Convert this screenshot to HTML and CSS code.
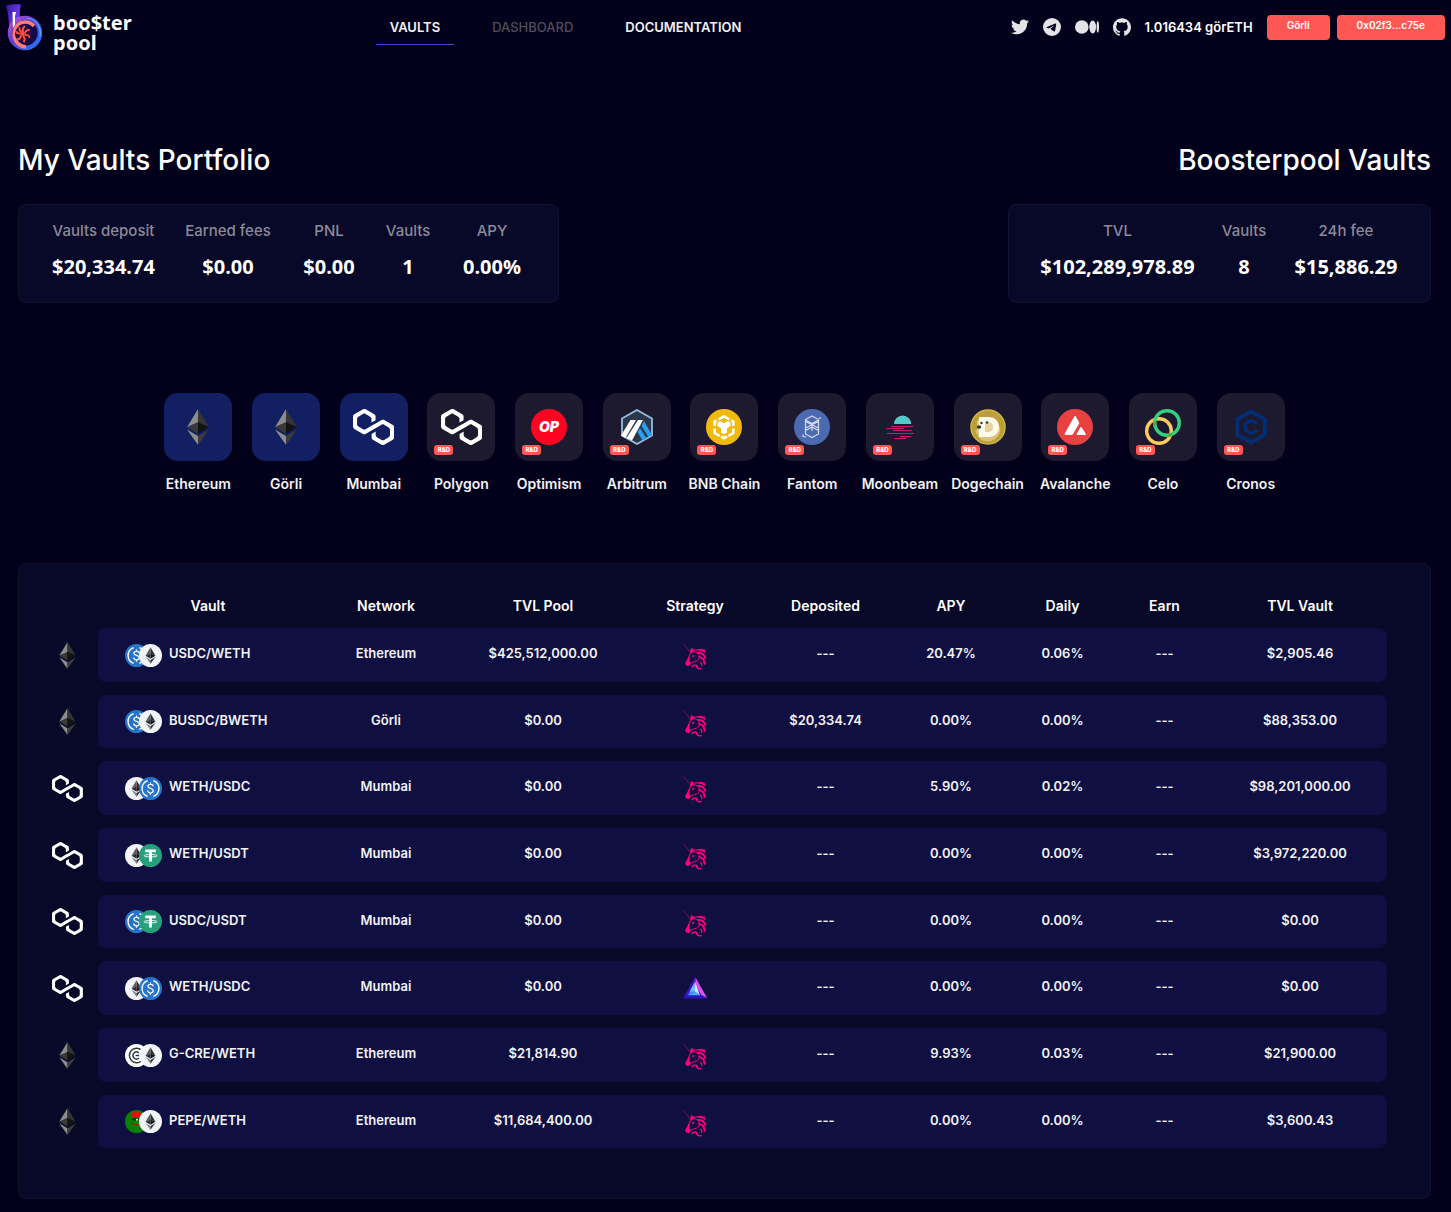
FILE: index.html
```html
<!DOCTYPE html>
<html lang="en">
<head>
<meta charset="utf-8">
<meta name="viewport" content="width=device-width, initial-scale=1">
<title>Boosterpool Vaults</title>
<link rel="stylesheet" href="styles.css">
</head>
<body>
<svg class="sprite" aria-hidden="true">
  <defs>
    <linearGradient id="pipe" x1="0" y1="0" x2="1" y2="1"><stop offset="0" stop-color="#2a1a9c"/><stop offset=".5" stop-color="#6a35e0"/><stop offset="1" stop-color="#2b6bff"/></linearGradient>
    <linearGradient id="shell" x1="0" y1="0" x2="1" y2="1"><stop offset="0" stop-color="#c05ad0"/><stop offset=".4" stop-color="#5a3fd8"/><stop offset="1" stop-color="#1f7bff"/></linearGradient>
    <linearGradient id="prism" x1="0" y1="0" x2="0" y2="1"><stop offset="0" stop-color="#7c7cf8"/><stop offset=".6" stop-color="#6fd0ff"/><stop offset="1" stop-color="#2a4cf0"/></linearGradient>
  </defs>
  <symbol id="eth" viewBox="0 0 22 36">
    <path fill="#8c8c8c" d="M11 0 0 18.3 11 13.3z"/><path fill="#343434" d="M11 0v13.3l11 5z"/>
    <path fill="#393939" d="M11 13.3 0 18.3l11 6.5z"/><path fill="#141414" d="M11 13.3v11.5l11-6.5z"/>
    <path fill="#8c8c8c" d="M0 20.4 11 36v-9.1z"/><path fill="#3c3c3b" d="M11 26.9V36l11-15.6z"/>
  </symbol>
  <symbol id="polygon" viewBox="0 0 38.4 33.5">
    <path fill="#fff" d="M29 10.2c-.7-.4-1.6-.4-2.4 0L21 13.5l-3.8 2.1-5.5 3.3c-.7.4-1.6.4-2.4 0L5 16.3c-.7-.4-1.2-1.2-1.2-2.1v-5c0-.8.4-1.6 1.2-2.1l4.3-2.5c.7-.4 1.6-.4 2.4 0L16 7.2c.7.4 1.2 1.2 1.2 2.1v3.3l3.8-2.2V7c0-.8-.4-1.6-1.2-2.1l-8-4.7c-.7-.4-1.6-.4-2.4 0L1.2 5C.4 5.4 0 6.2 0 7v9.4c0 .8.4 1.6 1.2 2.1l8.1 4.7c.7.4 1.6.4 2.4 0l5.5-3.2 3.8-2.2 5.5-3.2c.7-.4 1.6-.4 2.4 0l4.3 2.5c.7.4 1.2 1.2 1.2 2.1v5c0 .8-.4 1.6-1.2 2.1L29 28.8c-.7.4-1.6.4-2.4 0l-4.3-2.5c-.7-.4-1.2-1.2-1.2-2.1V21l-3.8 2.2v3.3c0 .8.4 1.6 1.2 2.1l8.1 4.7c.7.4 1.6.4 2.4 0l8.1-4.7c.7-.4 1.2-1.2 1.2-2.1V17c0-.8-.4-1.6-1.2-2.1L29 10.2z"/>
  </symbol>
  <symbol id="usdc" viewBox="0 0 24 24">
    <circle cx="12" cy="12" r="12" fill="#2775ca"/>
    <path fill="none" stroke="#fff" stroke-width="1.4" d="M9 3.800a8.700 8.700 0 0 0 0 16.400M15 3.800a8.700 8.700 0 0 1 0 16.400"/>
    <path fill="none" stroke="#fff" stroke-width="1.300" d="M14.700 9.700c0-1.500-1.100-2.100-2.700-2.100s-2.700.7-2.700 2c0 3.100 5.600 1.500 5.600 4.700 0 1.500-1.200 2.200-2.900 2.200s-2.900-.7-2.900-2.300M12 5.700v2M12 16.400v2"/>
  </symbol>
  <symbol id="weth" viewBox="0 0 24 24">
    <circle cx="12" cy="12" r="12" fill="#f3f4fa"/>
    <path fill="#5a5d5a" d="M12 3.500 6.800 12.300 12 10z"/><path fill="#2f3030" d="M12 3.500V10l5.200 2.300z"/>
    <path fill="#2f3030" d="m6.800 12.300 5.200 3.100V10z"/><path fill="#131313" d="M12 10v5.400l5.200-3.100z"/>
    <path fill="#828384" d="m6.800 13.600 5.200 7v-4z"/><path fill="#343535" d="M12 16.600v4l5.200-7z"/>
  </symbol>
  <symbol id="usdt" viewBox="0 0 24 24">
    <circle cx="12" cy="12" r="12" fill="#26a17b"/>
    <path fill="#fff" d="M6.500 5.700h11v3h-4v9.500h-3V8.700h-4z"/>
    <ellipse cx="12" cy="12.200" rx="6.800" ry="1.300" fill="none" stroke="#fff" stroke-width=".9"/>
  </symbol>
  <symbol id="cre" viewBox="0 0 24 24">
    <circle cx="12" cy="12" r="12" fill="#fff"/>
    <path fill="none" stroke="#30343b" stroke-width="1.500" d="M17 6.300A7.500 7.500 0 1 0 17 17.700M14.500 9.400a3.600 3.600 0 1 0 0 5.200M11 12h6"/>
  </symbol>
  <symbol id="pepe" viewBox="0 0 24 24">
    <circle cx="12" cy="12" r="12" fill="#078207"/>
    <path fill="#e01212" d="M6 3.500C8 1 15 1 17 3.500v3.300c-3 1.400-8 1.400-11 0z"/>
    <path fill="#0b3c0b" d="M6.500 9c3-1 6-.5 10 0v1.800c-3 .8-7 .5-9.500-.6z"/><circle cx="12.500" cy="10.200" r="1" fill="#fff"/>
    <path fill="none" stroke="#9c2515" stroke-width="1.500" d="M6.500 13.500c2 1.800 6 2.400 10.500 2"/>
  </symbol>
  <symbol id="unicorn" viewBox="0 0 72 80">
    <path fill="none" stroke="#ff007a" stroke-opacity=".7" stroke-width="2" d="m1 1 22 27"/>
    <path fill="#ff007a" d="M21 30c1-7 2-12 6-16l4 6 3 7-7 1-5 6zM15 44l4-10 4-3-4 15 1 8 4 7-4 6c-6 3-13 0-13-6 0-6 6-10 8-17zM27 38l8-3-1 5-6 2z"/>
    <path fill="#ff007a" d="M32 19c4-1 6 1 11-1l14-1 4 4 2-5c3 5 3 9 3 14-8-7-19-9-34-7z"/>
    <g fill="none" stroke="#ff007a" stroke-linecap="round">
      <path stroke-width="6" d="M46 29c11 1 18 6 21 15M49 41c10 3 16 10 16 21"/>
      <path stroke-width="3" d="M34 26c7 1 12 4 14 9 2 6 1 12-4 17-5 4-12 3-20 7"/>
      <path stroke-width="4" d="M27 71c3-7 13-7 17-1M40 69c1 6 6 9 14 7M53 57c3 3 4 6 3 10"/>
    </g>
  </symbol>
  <symbol id="gem" viewBox="0 -3 72 80">
    <path fill="#3a12c8" d="M36 0 72 64 0 64z"/><path fill="#e24df0" d="m38 2 34 60-16-8-19-30z"/>
    <path fill="#2617b8" d="m2 62 14-9 40 1 14 9z"/><path fill="url(#prism)" d="m36 12-22 42 22-10z"/>
    <path fill="#46a8ff" d="m36 44-22 10h40z"/><path fill="#c9e6ff" d="m36 14 14 38-14-8z"/>
  </symbol>
</svg>

<header class="topbar">
  <a class="brand" href="#" aria-label="Booster pool">
    <svg class="brand-mark" viewBox="0 0 36 47" aria-hidden="true">
      <path fill="url(#pipe)" d="M0 1.500C4 0 10 0 15 .5c-1.500 4-1.500 9-1 15l-3 9-8 10C3.500 24 3 10 0 1.500z"/>
      <circle cx="19" cy="29" r="15" fill="#14094a" stroke="url(#shell)" stroke-width="4.500"/>
      <path fill="none" stroke="#4fb0ff" stroke-width="1.200" d="M21 14c9 1 15 9 13 18"/>
      <path fill="none" stroke="#ff7a78" stroke-width="3.500" d="M28 22c-6-6-16-5-19 3-3 9 2 17 11 18"/>
      <path fill="#fff" d="M6.500 8h3.600L9 12v9l-2 3z"/>
      <circle cx="17" cy="30" r="8" fill="#2a0c3c"/>
      <path fill="none" stroke="#ff5040" stroke-width="1.900" stroke-linecap="round" d="M17 27.500q-1-3 1.500-5M19 28.500q1.500-3 4-2.500M19.500 31q3-.5 4 2M17.500 32.500q2 2.500.5 5M15 32q-.5 3-3.500 3.500M14.500 29.500q-3 .5-4.500-2M15.500 28q-2.500-1.500-2-4"/>
      <circle cx="17" cy="30" r="2" fill="#ff5040"/>
    </svg>
    <span class="brand-name">boo$ter<br>pool</span>
  </a>
  <nav class="menu" aria-label="Main">
    <a class="menu-link active" href="#">VAULTS</a>
    <a class="menu-link disabled" href="#">DASHBOARD</a>
    <a class="menu-link" href="#">DOCUMENTATION</a>
  </nav>
  <div class="account">
    <a href="#" aria-label="Twitter"><svg class="social" viewBox="0 0 24 24"><path d="M23.953 4.570a10 10 0 01-2.825.775 4.958 4.958 0 002.163-2.723c-.951.555-2.005.959-3.127 1.184a4.920 4.920 0 00-8.384 4.482C7.690 8.095 4.067 6.130 1.640 3.162a4.822 4.822 0 00-.666 2.475c0 1.710.870 3.213 2.188 4.096a4.904 4.904 0 01-2.228-.616v.06a4.923 4.923 0 003.946 4.827 4.996 4.996 0 01-2.212.085 4.936 4.936 0 004.604 3.417 9.867 9.867 0 01-6.102 2.105c-.39 0-.779-.023-1.170-.067a13.995 13.995 0 007.557 2.209c9.053 0 13.998-7.496 13.998-13.985 0-.21 0-.42-.015-.63A9.935 9.935 0 0024 4.590z"/></svg></a>
    <a href="#" aria-label="Telegram"><svg class="social" viewBox="0 0 24 24"><path d="M12 0a12 12 0 1 0 0 24 12 12 0 0 0 0-24zm5.562 8.161c-.18 1.897-.962 6.502-1.359 8.627-.168.900-.5 1.201-.82 1.230-.697.064-1.226-.461-1.901-.903-1.056-.692-1.653-1.123-2.678-1.799-1.185-.781-.417-1.210.258-1.911.177-.184 3.247-2.977 3.307-3.230.007-.032.015-.150-.056-.212s-.174-.041-.248-.024c-.106.024-1.793 1.139-5.062 3.345-.479.329-.913.489-1.302.481-.428-.009-1.252-.242-1.865-.442-.751-.244-1.349-.374-1.297-.788.027-.216.324-.437.893-.663 3.498-1.524 5.831-2.529 6.998-3.015 3.333-1.386 4.025-1.627 4.477-1.635.099-.002.321.023.465.141.119.098.152.228.166.331.016.122.034.355.019.498z"/></svg></a>
    <a href="#" aria-label="Medium"><svg class="social wide" viewBox="0 0 24 14"><circle cx="6.800" cy="7" r="6.800"/><ellipse cx="17.700" cy="7" rx="3.400" ry="6.400"/><ellipse cx="22.800" cy="7" rx="1.200" ry="5.700"/></svg></a>
    <a href="#" aria-label="GitHub"><svg class="social" viewBox="0 0 24 24"><path d="M12 .297c-6.630 0-12 5.373-12 12 0 5.303 3.438 9.800 8.205 11.385.600.113.820-.258.820-.577 0-.285-.010-1.040-.015-2.040-3.338.724-4.042-1.610-4.042-1.610C4.422 18.070 3.633 17.700 3.633 17.700c-1.087-.744.084-.729.084-.729 1.205.084 1.838 1.236 1.838 1.236 1.070 1.835 2.809 1.305 3.495.998.108-.776.417-1.305.760-1.605-2.665-.300-5.466-1.332-5.466-5.930 0-1.310.465-2.380 1.235-3.220-.135-.303-.540-1.523.105-3.176 0 0 1.005-.322 3.300 1.230.960-.267 1.980-.399 3-.405 1.020.006 2.040.138 3 .405 2.280-1.552 3.285-1.230 3.285-1.230.645 1.653.240 2.873.120 3.176.765.840 1.230 1.910 1.230 3.220 0 4.610-2.805 5.625-5.475 5.920.420.360.810 1.096.810 2.220 0 1.606-.015 2.896-.015 3.286 0 .315.210.690.825.570C20.565 22.092 24 17.592 24 12.297c0-6.627-5.373-12-12-12"/></svg></a>
    <span class="balance">1.016434 görETH</span>
    <div class="account-buttons">
      <button class="pill" type="button">Görli</button>
      <button class="pill address" type="button">0x02f3...c75e</button>
    </div>
  </div>
</header>

<main class="page">
  <div class="summary">
    <section>
      <h1>My Vaults Portfolio</h1>
      <dl class="stats portfolio">
        <div><dt>Vaults deposit</dt><dd>$20,334.74</dd></div>
        <div><dt>Earned fees</dt><dd>$0.00</dd></div>
        <div><dt>PNL</dt><dd>$0.00</dd></div>
        <div><dt>Vaults</dt><dd>1</dd></div>
        <div><dt>APY</dt><dd>0.00%</dd></div>
      </dl>
    </section>
    <section class="right">
      <h1>Boosterpool Vaults</h1>
      <dl class="stats totals">
        <div><dt>TVL</dt><dd>$102,289,978.89</dd></div>
        <div><dt>Vaults</dt><dd>8</dd></div>
        <div><dt>24h fee</dt><dd>$15,886.29</dd></div>
      </dl>
    </section>
  </div>

  <div class="networks">
    <button class="network live" type="button"><span class="tile"><svg class="h36" viewBox="0 0 22 36"><use href="#eth"/></svg></span>Ethereum</button>
    <button class="network live" type="button"><span class="tile"><svg class="h36" viewBox="0 0 22 36"><use href="#eth"/></svg></span>Görli</button>
    <button class="network live" type="button"><span class="tile"><svg class="h36" viewBox="0 0 38.4 33.5"><use href="#polygon"/></svg></span>Mumbai</button>
    <button class="network" type="button"><span class="tile"><svg class="h36" viewBox="0 0 38.4 33.5"><use href="#polygon"/></svg><span class="tag">R&amp;D</span></span>Polygon</button>
    <button class="network" type="button"><span class="tile"><svg class="h36" viewBox="0 0 36 36"><circle cx="18" cy="18" r="18" fill="#ff0420"/><text x="18" y="23" class="op">OP</text></svg><span class="tag">R&amp;D</span></span>Optimism</button>
    <button class="network" type="button"><span class="tile"><svg class="h36" viewBox="0 0 32 36"><path fill="#2d374b" stroke="#96bedc" stroke-width="1.800" d="m16 1 15 8.500v17L16 35 1 26.500v-17z"/><path fill="#fff" d="M9.500 11h5.500L4.500 29 0 26.500zM17 11h5L11 31.500 5.500 29z"/><path fill="#28a0f0" d="m23 12 8 14-3.500 2-7-11zM19 19l6.500 10.500-4 2L16.500 23z"/></svg><span class="tag">R&amp;D</span></span>Arbitrum</button>
    <button class="network" type="button"><span class="tile"><svg class="h36" viewBox="0 0 36 36"><circle cx="18" cy="18" r="18" fill="#f0b90b"/><path fill="none" stroke="#fff" stroke-width="2.600" d="m12.500 10.500 5.500-3.200 5.500 3.200M8.700 17v-4.500l2-1.200M27.300 17v-4.500l-2-1.200M8.700 19.500v4.500l5 3M27.300 19.500v4.500l-5 3M15 27.500l3 1.700 3-1.700"/><path fill="#fff" d="m11.500 13.500 2.500-1.500 4 2.300 4-2.300 2.500 1.500v3.500l-3.500 2.200v4.300l-3 1.700-3-1.700v-4.300L11.500 17z"/></svg><span class="tag">R&amp;D</span></span>BNB Chain</button>
    <button class="network" type="button"><span class="tile"><svg class="h36" viewBox="0 0 36 36"><circle cx="18" cy="18" r="18" fill="#4b6ab2"/><path fill="none" stroke="#d4dcee" stroke-width="1.200" d="m18 7 6.500 3.500v14.500L18 28.500 11.500 25V10.500zM11.500 11 18 14.500l6.500-3.500M11.500 19l13-6.500M24.500 19l-13-6.500M11.500 21.500l6.500-3.500 6.500 3.500M18 14.500V22M25 9.500l2-1M9 25.500v2l3 .5"/></svg><span class="tag">R&amp;D</span></span>Fantom</button>
    <button class="network" type="button"><span class="tile"><svg class="h36" viewBox="0 0 28 36"><path fill="#53cbc9" d="M8 15a8.600 8.600 0 0 1 17.200 0z"/><path stroke="#c8147b" stroke-width="1.200" d="M5 17.500h22M0 19.500h18M7 21.500h19M1 24.500h27M14 27.500h11M8 29.500h12"/></svg><span class="tag">R&amp;D</span></span>Moonbeam</button>
    <button class="network" type="button"><span class="tile"><svg class="h36" viewBox="0 0 36 36"><circle cx="18" cy="18" r="17" fill="#ba9f33" stroke="#d0b54a" stroke-width="1.500"/><path fill="#d9c37c" d="M5 22c5-5 18-8 25-4 1 4-1 9-5 12-6 4-12 3-16-1z"/><path fill="#c9974f" d="m12 9 2-6 5 5 4-1 2-4 2 8-3 5H12z"/><path fill="#e8d3a0" d="M7 14c1-6 8-7 12-5l7 5 1 11-12 3-7-5z"/><path fill="#fffbea" fill-rule="evenodd" d="M9 8h9c7 0 11 4 11 10s-4 10-11 10H9zm6 5v10h3c3 0 5-2 5-5s-2-5-5-5z"/><circle cx="11.500" cy="14" r="1.200" fill="#333"/><circle cx="17" cy="13.500" r="1.200" fill="#333"/><ellipse cx="9" cy="18" rx="2.200" ry="1.700" fill="#333"/></svg><span class="tag">R&amp;D</span></span>Dogechain</button>
    <button class="network" type="button"><span class="tile"><svg class="h36" viewBox="0 0 36 36"><circle cx="18" cy="18" r="18" fill="#e84142"/><path fill="#fff" d="M17 8c.8-1.300 1.500-1.300 2.200 0l2.600 4.700c.5 1 .5 1.500 0 2.500L16 25c-.5.800-1 1-2 1H9c-1.500 0-1.700-.7-1-2zM23 19c.7-1.200 1.300-1.200 2 0l3.500 5.500c.6 1 .3 1.500-.8 1.500h-7c-1.100 0-1.400-.5-.8-1.500z"/></svg><span class="tag">R&amp;D</span></span>Avalanche</button>
    <button class="network" type="button"><span class="tile"><svg class="h36" viewBox="0 0 36 36"><circle cx="14" cy="22" r="12.300" fill="none" stroke="#fbcc5c" stroke-width="3.400"/><circle cx="22" cy="14" r="12.300" fill="none" stroke="#35d07f" stroke-width="3.400"/><path fill="none" stroke="#5ea33b" stroke-width="3.400" d="M9.800 12.500q-.4 2 .3 4M23.500 26.200q2 0 3.500-1"/></svg><span class="tag">R&amp;D</span></span>Celo</button>
    <button class="network" type="button"><span class="tile"><svg class="h36" viewBox="0 0 32 36"><g fill="none" stroke="#002d74"><path stroke-width="4" d="m16 2.500 13.800 7.800v15.400L16 33.500 2.200 25.700V10.300z"/><path stroke-width="3" d="M21.500 15.500v-1L16 11.500l-5.500 3.200v6.600l5.500 3.200 5.500-3v-1"/></g></svg><span class="tag">R&amp;D</span></span>Cronos</button>
  </div>

  <section class="vaults">
    <table>
      <colgroup><col class="c-chain"><col class="c-vault"><col class="c-network"><col class="c-pool"><col class="c-strategy"><col class="c-deposited"><col class="c-apy"><col class="c-daily"><col class="c-earn"><col class="c-tvl"></colgroup>
      <thead>
        <tr><td></td><th scope="col">Vault</th><th scope="col">Network</th><th scope="col">TVL Pool</th><th scope="col">Strategy</th><th scope="col">Deposited</th><th scope="col">APY</th><th scope="col">Daily</th><th scope="col">Earn</th><th scope="col">TVL Vault</th></tr>
      </thead>
      <tbody>
        <tr><td><svg class="chain" viewBox="0 0 22 36"><use href="#eth"/></svg></td><td><div class="pair"><svg><use href="#usdc"/></svg><svg><use href="#weth"/></svg><span>USDC/WETH</span></div></td><td>Ethereum</td><td>$425,512,000.00</td><td><svg class="strategy"><use href="#unicorn"/></svg></td><td>---</td><td>20.47%</td><td>0.06%</td><td>---</td><td>$2,905.46</td></tr>
        <tr><td><svg class="chain" viewBox="0 0 22 36"><use href="#eth"/></svg></td><td><div class="pair"><svg><use href="#usdc"/></svg><svg><use href="#weth"/></svg><span>BUSDC/BWETH</span></div></td><td>Görli</td><td>$0.00</td><td><svg class="strategy"><use href="#unicorn"/></svg></td><td>$20,334.74</td><td>0.00%</td><td>0.00%</td><td>---</td><td>$88,353.00</td></tr>
        <tr><td><svg class="chain" viewBox="0 0 38.4 33.5"><use href="#polygon"/></svg></td><td><div class="pair"><svg><use href="#weth"/></svg><svg><use href="#usdc"/></svg><span>WETH/USDC</span></div></td><td>Mumbai</td><td>$0.00</td><td><svg class="strategy"><use href="#unicorn"/></svg></td><td>---</td><td>5.90%</td><td>0.02%</td><td>---</td><td>$98,201,000.00</td></tr>
        <tr><td><svg class="chain" viewBox="0 0 38.4 33.5"><use href="#polygon"/></svg></td><td><div class="pair"><svg><use href="#weth"/></svg><svg><use href="#usdt"/></svg><span>WETH/USDT</span></div></td><td>Mumbai</td><td>$0.00</td><td><svg class="strategy"><use href="#unicorn"/></svg></td><td>---</td><td>0.00%</td><td>0.00%</td><td>---</td><td>$3,972,220.00</td></tr>
        <tr><td><svg class="chain" viewBox="0 0 38.4 33.5"><use href="#polygon"/></svg></td><td><div class="pair"><svg><use href="#usdc"/></svg><svg><use href="#usdt"/></svg><span>USDC/USDT</span></div></td><td>Mumbai</td><td>$0.00</td><td><svg class="strategy"><use href="#unicorn"/></svg></td><td>---</td><td>0.00%</td><td>0.00%</td><td>---</td><td>$0.00</td></tr>
        <tr><td><svg class="chain" viewBox="0 0 38.4 33.5"><use href="#polygon"/></svg></td><td><div class="pair"><svg><use href="#weth"/></svg><svg><use href="#usdc"/></svg><span>WETH/USDC</span></div></td><td>Mumbai</td><td>$0.00</td><td><svg class="strategy"><use href="#gem"/></svg></td><td>---</td><td>0.00%</td><td>0.00%</td><td>---</td><td>$0.00</td></tr>
        <tr><td><svg class="chain" viewBox="0 0 22 36"><use href="#eth"/></svg></td><td><div class="pair"><svg><use href="#cre"/></svg><svg><use href="#weth"/></svg><span>G-CRE/WETH</span></div></td><td>Ethereum</td><td>$21,814.90</td><td><svg class="strategy"><use href="#unicorn"/></svg></td><td>---</td><td>9.93%</td><td>0.03%</td><td>---</td><td>$21,900.00</td></tr>
        <tr><td><svg class="chain" viewBox="0 0 22 36"><use href="#eth"/></svg></td><td><div class="pair"><svg><use href="#pepe"/></svg><svg><use href="#weth"/></svg><span>PEPE/WETH</span></div></td><td>Ethereum</td><td>$11,684,400.00</td><td><svg class="strategy"><use href="#unicorn"/></svg></td><td>---</td><td>0.00%</td><td>0.00%</td><td>---</td><td>$3,600.43</td></tr>
      </tbody>
    </table>
  </section>
</main>
</body>
</html>
```
FILE: styles.css
```css
* { box-sizing: border-box; }

body {
  margin: 0;
  background: #03001b;
  color: #f2f2f5;
  font: 500 13px/20px Inter, "Open Sans", sans-serif;
}

a { color: inherit; text-decoration: none; }
button { font: inherit; color: inherit; border: 0; background: none; padding: 0; cursor: pointer; }
svg { display: block; }
.sprite { position: absolute; width: 0; height: 0; }

/* Top bar */
.topbar {
  display: grid;
  grid-template-columns: 26% auto 1fr;
  align-items: center;
  min-height: 54px;
  padding-right: 6px;
}
.brand { display: flex; gap: 11px; padding-left: 6px; align-items: center; }
.brand-mark { width: 36px; height: 47px; }
.brand-name { padding-top: 12px; color: #fff; font: 700 20px/20px "Noto Sans", sans-serif; }
.menu { display: flex; align-items: center; gap: 24px; }
.menu-link { padding: 7px 14px; border-bottom: 1px solid transparent; font-weight: 600; }
.menu-link.active { border-color: #4a40d8; }
.menu-link.disabled { color: #504e5c; font-weight: 500; }
.account { display: flex; align-items: center; justify-content: flex-end; gap: 14px; }
.social { width: 18px; height: 18px; fill: #e4e4e8; }
.social.wide { width: 24px; height: 14px; }
.balance { color: #fff; font-weight: 600; }
.account-buttons { display: flex; gap: 7px; }
.pill {
  height: 25px;
  padding: 0 20px 4px;
  border-radius: 4px;
  background: #ff5753;
  color: #fff;
  font-size: 10px;
  font-weight: 600;
}

/* Summary */
.page { padding: 86px 20px 13px 18px; }
.summary { display: flex; justify-content: space-between; }
.right { text-align: right; }
h1 { margin: 0 0 24px; color: #fff; font-size: 28px; line-height: 40px; font-weight: 500; }
.stats {
  display: grid;
  gap: 28px;
  margin: 0;
  padding: 16px 32px 21px;
  border: 1px solid #12122f;
  border-radius: 8px;
  background: #080828;
  text-align: center;
  white-space: nowrap;
}
.stats.portfolio { grid-template-columns: 105px 88px 58px 44px 68px; }
.stats.totals { grid-template-columns: 153px 44px 104px; }
.stats div { display: flex; flex-direction: column; align-items: center; }
dt { color: #8b8a98; font-size: 15px; line-height: 20px; font-weight: 500; }
dd { margin: 12px 0 0; color: #fff; font: 700 20px/28px "Open Sans", sans-serif; }

/* Networks */
.networks {
  display: grid;
  grid-template-columns: repeat(13, 1fr);
  max-width: 1140px;
  margin: 90px auto 69px;
}
.network {
  display: flex;
  flex-direction: column;
  align-items: center;
  gap: 13px;
  font-size: 14px;
  font-weight: 600;
  white-space: nowrap;
}
.tile {
  position: relative;
  display: grid;
  place-items: center;
  width: 68px;
  height: 68px;
  border-radius: 14px;
  background: #1d1a30;
}
.live .tile { background: #121f63; }
.h36 { height: 36px; }
.op { fill: #fff; font: italic 900 14px Inter, sans-serif; text-anchor: middle; }
.tag {
  position: absolute;
  left: 7px;
  bottom: 6px;
  width: 19px;
  border-radius: 3px;
  background: #ff5753;
  color: #fff;
  font-size: 6px;
  line-height: 10px;
  font-weight: 800;
}

/* Vault table */
.vaults {
  padding: 20px 43px 37px 17px;
  border: 1px solid #12122f;
  border-radius: 8px;
  background: #080828;
}
table { width: 100%; table-layout: fixed; border-collapse: separate; border-spacing: 0 13px; }
.c-chain { width: 62px; }
.c-vault { width: 220px; }
.c-network { width: 136px; }
.c-pool { width: 178px; }
.c-strategy { width: 126px; }
.c-deposited { width: 135px; }
.c-apy { width: 116px; }
.c-daily { width: 107px; }
.c-earn { width: 97px; }
.c-tvl { width: 174px; }
thead { line-height: 18px; }
th { padding: 0; color: #fff; font-size: 14px; font-weight: 600; }
td { padding: 0; text-align: center; }
tbody td { height: 54px; padding-bottom: 4px; background: #0f0f41; font-weight: 600; }
tbody tr:nth-child(3n+2) td { height: 53px; }
tbody td:first-child { padding: 0; background: none; }
tbody td:nth-child(2) { padding: 0 0 0 27px; border-radius: 8px 0 0 8px; }
tbody td:nth-child(5) { padding: 3px 0 0; }
tbody td:last-child { border-radius: 0 8px 8px 0; }
.chain { width: 31px; height: 27px; margin: 0 auto; }
.strategy { width: 24px; height: 27px; margin: 0 auto; }
.pair { display: flex; align-items: center; }
.pair svg { width: 23px; height: 23px; }
.pair svg + svg { margin-left: -9px; }
.pair span { padding: 0 0 4px 7px; }
```
